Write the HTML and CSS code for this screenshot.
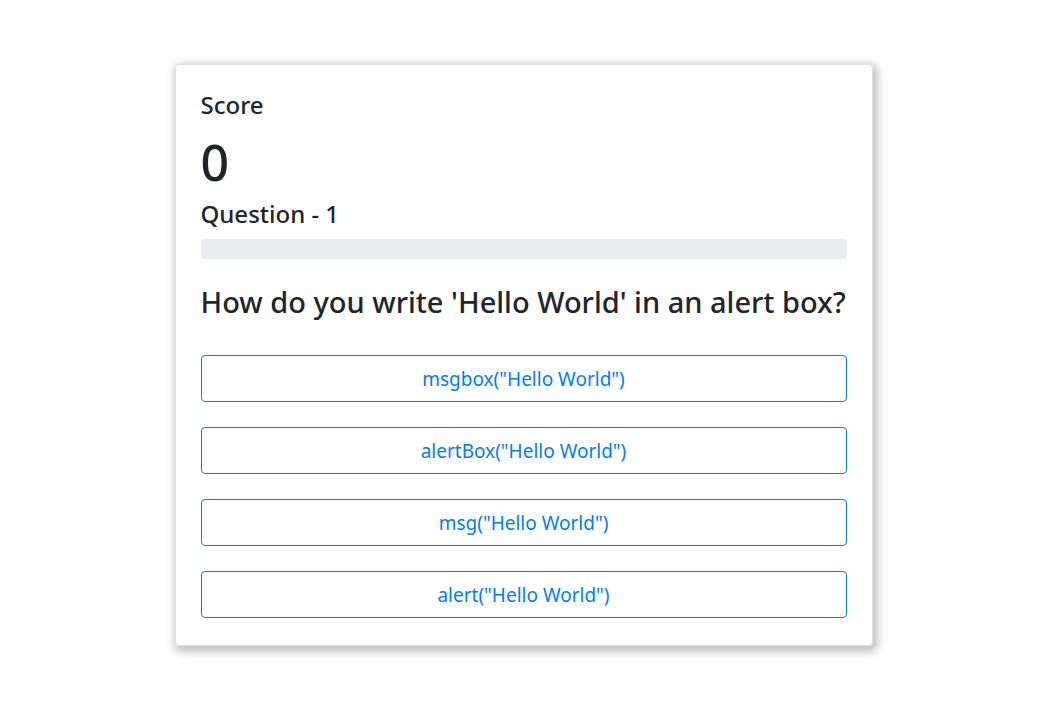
FILE: index.html
```html
<!DOCTYPE html>
<html>
<head>
<meta charset="utf-8">
<link rel="stylesheet" href="styles.css">
</head>
<body>
<div class="page">
  <div class="card">
    <div class="label">Score</div>
    <div class="score">0</div>
    <div class="label qnum">Question - 1</div>
    <div class="progress"><div class="bar" style="width:0%"></div></div>
    <h2 class="question">How do you write 'Hello World' in an alert box?</h2>
    <div class="answers">
      <button class="answer">msgbox("Hello World")</button>
      <button class="answer">alertBox("Hello World")</button>
      <button class="answer">msg("Hello World")</button>
      <button class="answer">alert("Hello World")</button>
    </div>
  </div>
</div>
</body>
</html>
```
FILE: styles.css
```css
* { box-sizing: border-box; }
html, body { margin: 0; padding: 0; background: #fff; }
body {
  font-family: "Noto Sans", "Open Sans", "Liberation Sans", sans-serif;
  color: #212529;
}
.page {
  display: flex;
  justify-content: center;
  padding: 64px 0 40px;
}
.card {
  width: 698px;
  border: 1px solid rgba(0,0,0,.125);
  border-radius: 4px;
  box-shadow: 2px 3px 8px 3px rgba(0,0,0,.24);
  padding: 26px 25px 27px;
  display: flex;
  flex-direction: column;
}
.label {
  font-size: 24px;
  font-weight: 500;
  line-height: 28px;
}
.score {
  font-size: 50px;
  line-height: 62px;
  font-weight: 500;
  margin-top: 12px;
}
.qnum { margin-top: 7px; }
.progress {
  margin-top: 11px;
  height: 20px;
  background: #e9ecef;
  border-radius: 4px;
  overflow: hidden;
}
.bar { height: 100%; background: #007bff; }
.question {
  margin: 26px 0 0;
  font-size: 29px;
  font-weight: 500;
  line-height: 34px;
  white-space: nowrap;
}
.answers {
  margin-top: 36px;
  display: flex;
  flex-direction: column;
  gap: 25px;
}
.answer {
  height: 47px;
  background: #fff;
  border: 1px solid #007bff;
  border-radius: 4px;
  color: #007bff;
  font-family: inherit;
  font-size: 19px;
  line-height: 24px;
  cursor: pointer;
}
```
